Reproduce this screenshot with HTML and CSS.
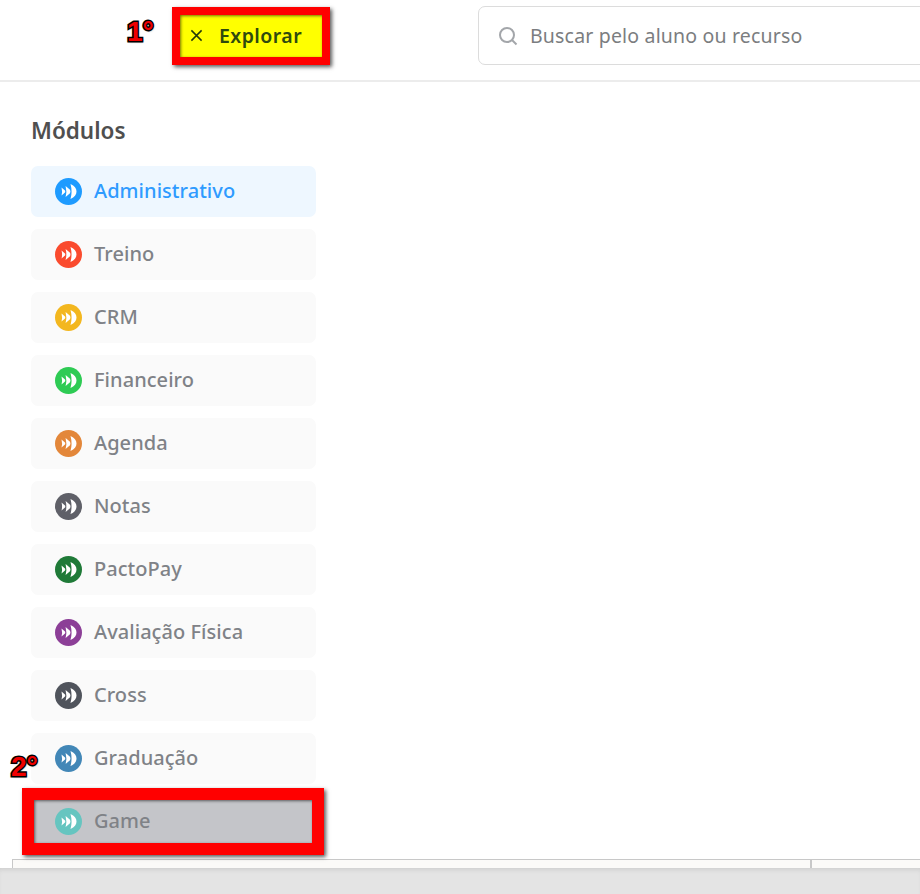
FILE: index.html
```html
<!DOCTYPE html>
<html lang="pt">
<head>
<meta charset="utf-8">
<title>Módulos</title>
<link rel="stylesheet" href="styles.css">
</head>
<body>
<svg class="defs" width="0" height="0" aria-hidden="true">
  <symbol id="mod" viewBox="0 0 27 27">
    <circle cx="13.5" cy="13.5" r="13.5" fill="currentColor"/>
    <path d="M6.5 9.5 Q7.6 13.5 6.5 17.5 L10 14.6 Q10.6 13.5 10 12.4 Z" fill="#fff"/>
    <path d="M10.6 8 Q12.1 13.5 10.6 19 L15 15.2 Q15.9 13.5 15 11.8 Z" fill="#fff"/>
    <path d="M15.5 6 Q17.6 13.5 15.5 21 C19.5 19.5 21.5 16.5 21.5 13.5 C21.5 10.5 19.5 7.5 15.5 6 Z" fill="#fff"/>
  </symbol>
</svg>
<header class="top">
  <div class="explorar">
    <svg class="x" viewBox="0 0 14 14"><path d="M1.5 1.5 L12.5 12.5 M12.5 1.5 L1.5 12.5"/></svg>
    <span>Explorar</span>
  </div>
  <div class="busca">
    <svg class="lupa" viewBox="0 0 20 20"><circle cx="9" cy="9" r="7"/><path d="M14 14 L18.5 18.5"/></svg>
    <span>Buscar pelo aluno ou recurso</span>
  </div>
</header>
<main class="painel">
  <h2 class="titulo">Módulos</h2>
  <ul class="lista">
    <li class="mod ativo"><svg class="ic c-adm"><use href="#mod"/></svg>Administrativo</li>
    <li class="mod"><svg class="ic c-tre"><use href="#mod"/></svg>Treino</li>
    <li class="mod"><svg class="ic c-crm"><use href="#mod"/></svg>CRM</li>
    <li class="mod"><svg class="ic c-fin"><use href="#mod"/></svg>Financeiro</li>
    <li class="mod"><svg class="ic c-age"><use href="#mod"/></svg>Agenda</li>
    <li class="mod"><svg class="ic c-not"><use href="#mod"/></svg>Notas</li>
    <li class="mod"><svg class="ic c-pay"><use href="#mod"/></svg>PactoPay</li>
    <li class="mod"><svg class="ic c-ava"><use href="#mod"/></svg>Avaliação Física</li>
    <li class="mod"><svg class="ic c-cro"><use href="#mod"/></svg>Cross</li>
    <li class="mod"><svg class="ic c-gra"><use href="#mod"/></svg>Graduação</li>
    <li class="mod game"><svg class="ic c-gam"><use href="#mod"/></svg>Game</li>
  </ul>
</main>
<div class="tabela"><div class="col1"></div><div class="col2"></div></div>
<footer class="rodape"></footer>
<span class="nota n1">1°</span>
<span class="nota n2">2°</span>
<div class="marca m1"></div>
<div class="marca m2"></div>
</body>
</html>
```
FILE: styles.css
```css
* { box-sizing: border-box; }
html, body { margin: 0; padding: 0; }
body {
  width: 920px;
  height: 894px;
  overflow: hidden;
  position: relative;
  background: #fff;
  font-family: "Noto Sans", "Open Sans", sans-serif;
}
.defs { position: absolute; }
.top {
  height: 82px;
  background: #fff;
  border-bottom: 2px solid #ececec;
  display: flex;
  align-items: flex-start;
  padding: 7px 0 0 180px;
}
.explorar {
  width: 142px;
  height: 42px;
  margin-top: 8px;
  flex: none;
  background: #ffff00;
  display: flex;
  align-items: center;
  padding-left: 10px;
  gap: 16px;
  font-size: 19.5px;
  font-weight: 600;
  letter-spacing: .45px;
  color: #2f4a0e;
}
.explorar span { position: relative; top: -1px; }
.x { width: 13px; height: 13px; margin-top: -2px; flex: none; }
.x path { stroke: #22380a; stroke-width: 1.6; fill: none; }
.busca {
  margin-left: 156px;
  width: 460px;
  height: 59px;
  margin-top: -1px;
  border: 1px solid #dcdcdc;
  border-radius: 7px;
  display: flex;
  align-items: center;
  padding-left: 19px;
  gap: 12px;
  font-size: 19.5px;
  letter-spacing: .18px;
  color: #7b7d80;
  flex: none;
}
.lupa { width: 20px; height: 20px; flex: none; }
.lupa circle, .lupa path { fill: none; stroke: #a3a6aa; stroke-width: 2; }
.painel { padding: 34px 0 0 31px; }
.titulo {
  margin: 0 0 20px;
  font-size: 22.5px;
  line-height: 30px;
  font-weight: 600;
  color: #4f4f4f;
}
.lista {
  list-style: none;
  margin: 0;
  padding: 0;
  width: 285px;
  display: flex;
  flex-direction: column;
  gap: 12px;
}
.mod {
  height: 51px;
  border-radius: 7px;
  background: #fafafa;
  display: flex;
  align-items: center;
  padding: 0 0 2px 24px;
  gap: 12px;
  font-size: 20px;
  font-weight: 500;
  letter-spacing: .05px;
  color: #7f8287;
}
.ativo { background: #eef7ff; color: #2f9bff; }
.game { background: #c4c5c9; border-radius: 0; }
.ic { width: 27px; height: 27px; flex: none; margin-top: 2px; }
.c-adm { color: #1e9bff; }
.c-tre { color: #fa4b2e; }
.c-crm { color: #f3b71f; }
.c-fin { color: #2ecb54; }
.c-age { color: #e3873a; }
.c-not { color: #5f6068; }
.c-pay { color: #1f7a38; }
.c-ava { color: #8c3f97; }
.c-cro { color: #50545c; }
.c-gra { color: #4287b7; }
.c-gam { color: #66c5c0; }
.tabela {
  position: absolute;
  left: 12px;
  right: 0;
  top: 859px;
  height: 9px;
  display: flex;
  border: 1px solid #c8c8c8;
  border-bottom: 0;
  border-right: 0;
  background: #fbfaf8;
}
.col1 { width: 799px; border-right: 2px solid #c8c8c8; }
.col2 { flex: 1; }
.rodape {
  position: absolute;
  left: 0;
  right: 0;
  top: 868px;
  height: 26px;
  background: #e4e4e4;
  box-shadow: inset 0 4px 4px -2px #cfcfcf;
}
.nota {
  position: absolute;
  font-family: "Liberation Sans", sans-serif;
  font-weight: 700;
  font-size: 28px;
  line-height: 30px;
  color: #f00000;
  -webkit-text-stroke: 3px #000;
  paint-order: stroke fill;
  text-shadow: 1px 1px 2px rgba(0,0,0,.5);
}
.n1 { left: 127px; top: 17px; }
.n2 { left: 11px; top: 752px; }
.marca {
  position: absolute;
  border-style: solid;
  border-color: #ff0000;
  box-shadow: 2px 2px 4px rgba(0,0,0,.65), inset 1px 1px 3px rgba(0,0,0,.55);
}
.m1 { left: 172px; top: 7px; width: 158px; height: 58px; border-width: 8px; }
.m2 {
  left: 22px;
  top: 788px;
  width: 302px;
  height: 67px;
  border-width: 12px;
}
```
